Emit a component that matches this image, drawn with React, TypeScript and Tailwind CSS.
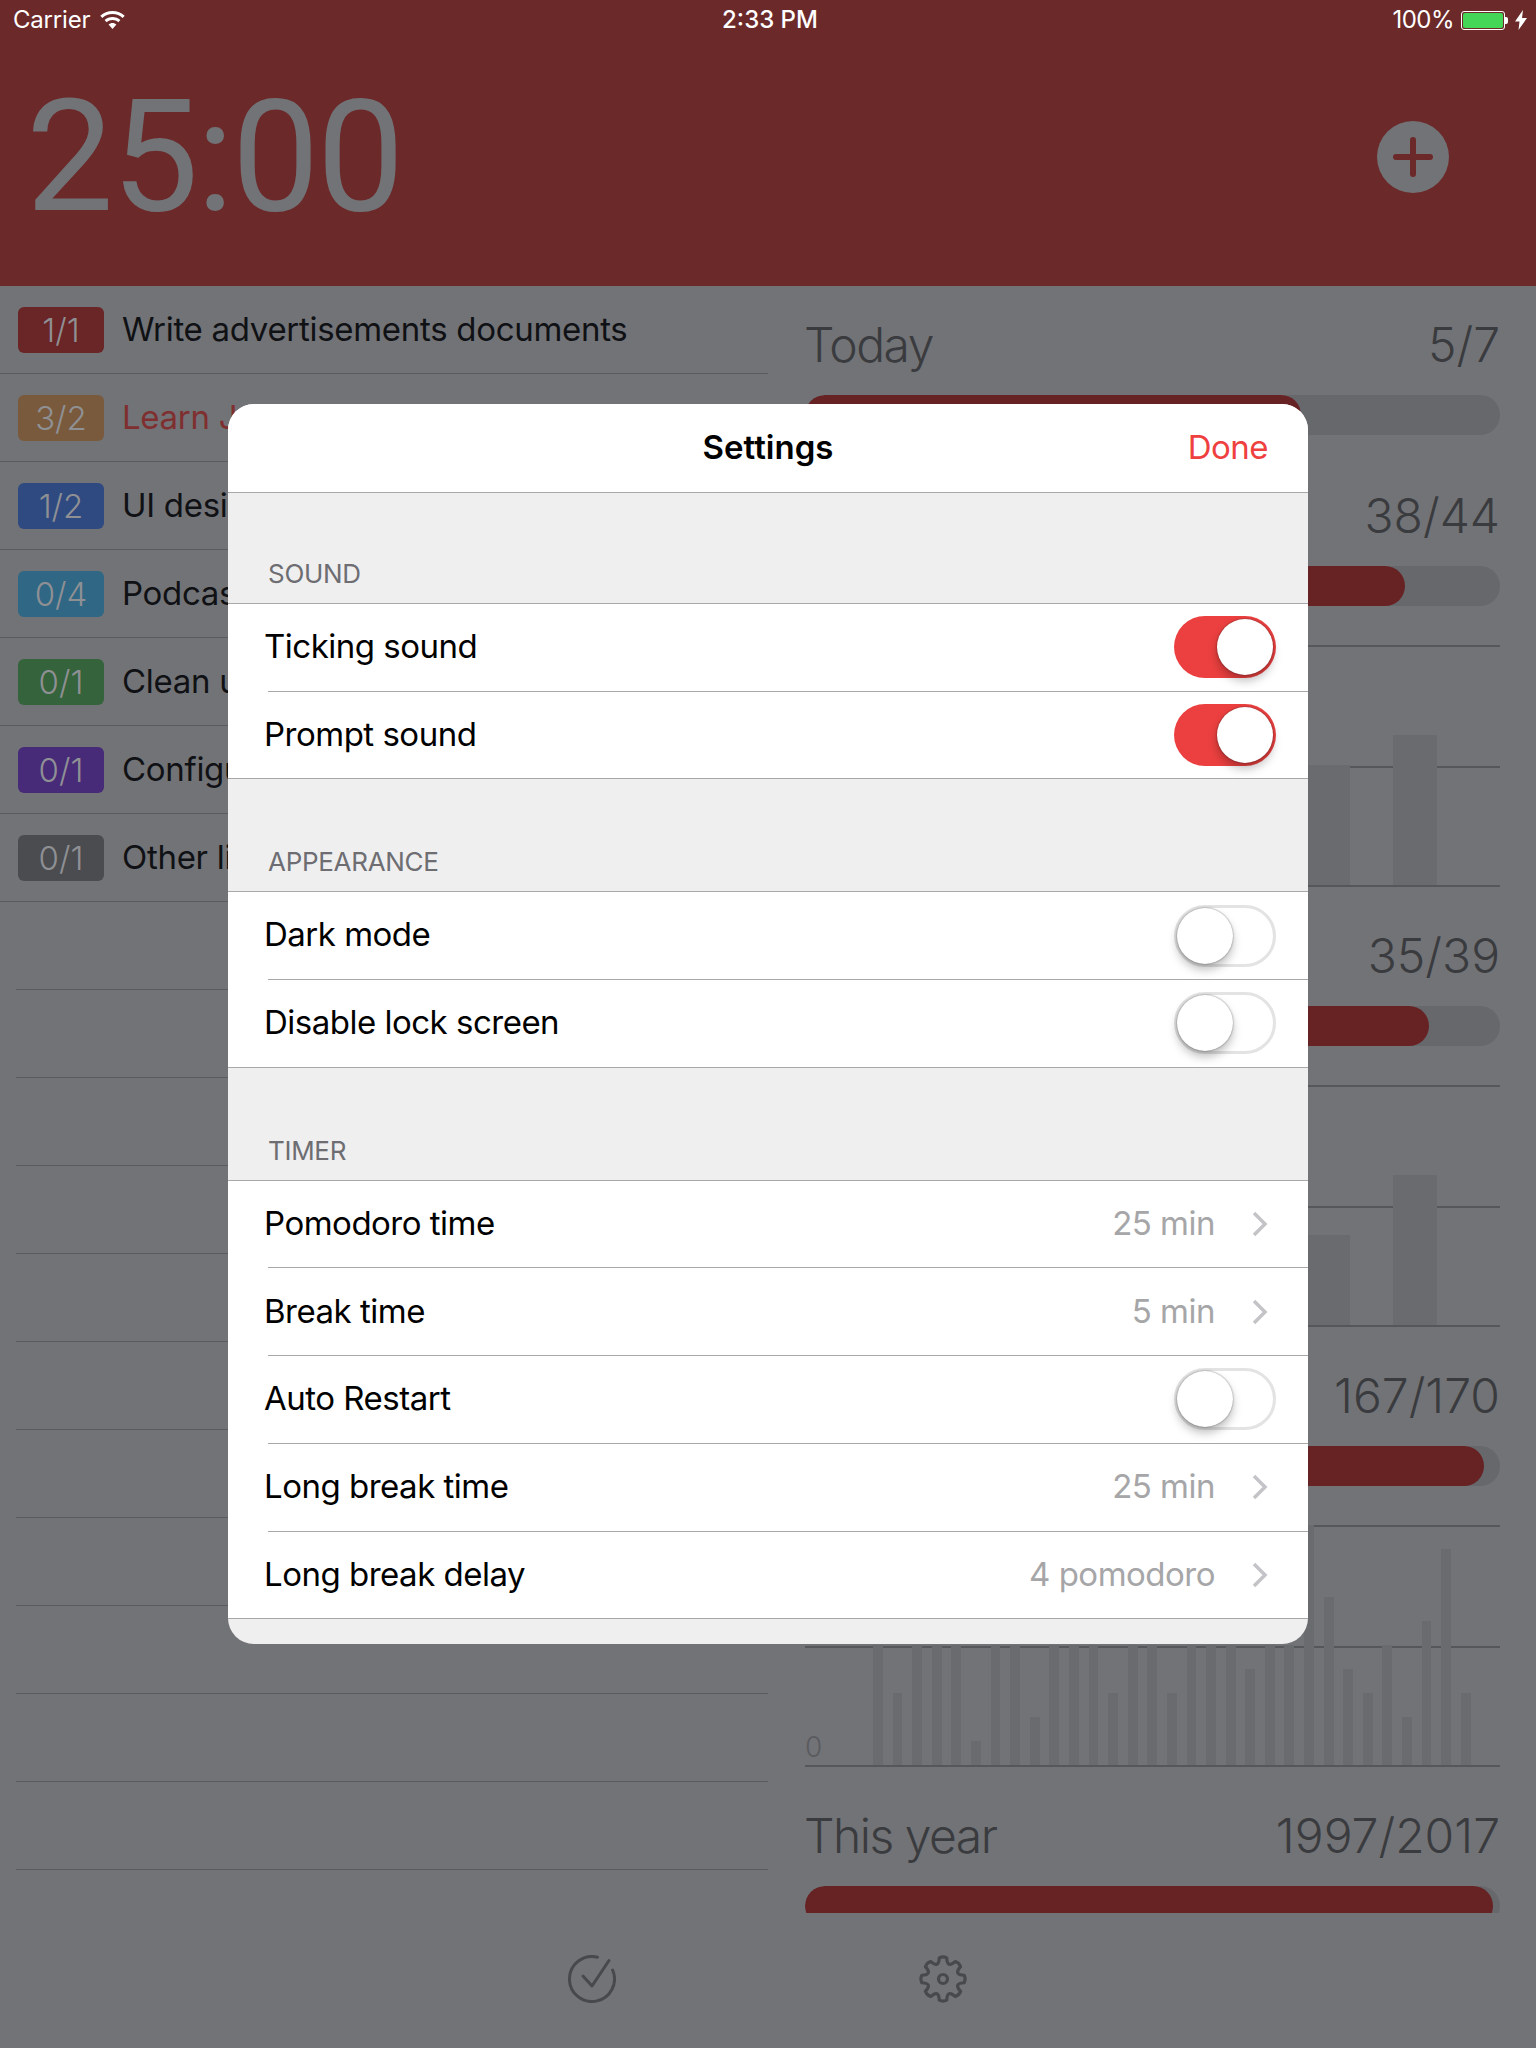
import React from "react";

const tasks = [
  { count: "1/1", color: "bg-[#6a2527]", name: "Write advertisements documents" },
  { count: "3/2", color: "bg-[#7a5a3c]", name: "Learn JavaScript", late: true },
  { count: "1/2", color: "bg-[#2e4a80]", name: "UI design" },
  { count: "0/4", color: "bg-[#2f6785]", name: "Podcast" },
  { count: "0/1", color: "bg-[#35633b]", name: "Clean up" },
  { count: "0/1", color: "bg-[#472a78]", name: "Configure" },
  { count: "0/1", color: "bg-[#4b4c50]", name: "Other links" },
];

const monthValues = [5, 3, 5, 5, 5, 1, 5, 5, 2, 5, 5, 5, 3, 5, 5, 3, 5, 5, 5, 4, 5, 5, 10, 7, 4, 3, 5, 2, 6, 9, 3];

// 8 rounded teeth around the centre of a 48 box
function gearPath() {
  const pt = (deg: number, r: number) => {
    const a = (deg * Math.PI) / 180;
    return `${(24 + r * Math.cos(a)).toFixed(2)} ${(24 + r * Math.sin(a)).toFixed(2)}`;
  };
  let d = "";
  for (let i = 0; i < 8; i++) {
    const a = i * 45 - 90;
    d += `${i === 0 ? "M" : "L"}${pt(a - 10, 21.5)} Q${pt(a, 23)} ${pt(a + 10, 21.5)} Q${pt(a + 22.5, 11)} ${pt(a + 35, 21.5)} `;
  }
  return d + "Z";
}

function StatusBar() {
  return (
    <div className="flex h-10 items-center justify-between pl-[13px] pr-[9px] text-[24px] text-white">
      <div className="flex w-[300px] items-center gap-[10px] tracking-[-0.2px]">
        <span>Carrier</span>
        <svg width="25" height="18" viewBox="0 0 25 18" fill="white">
          <path d="M12.5 0C7.8 0 3.5 1.8 0.3 4.8l2 2.2C5 4.5 8.6 3 12.5 3s7.5 1.5 10.2 4l2-2.2C21.500 1.800 17.200 0 12.500 0z" />
          <path d="M12.500 6c-3 0-5.800 1.200-7.900 3.100l2.100 2.200c1.500-1.400 3.600-2.300 5.800-2.300s4.300 0.900 5.800 2.300l2.100-2.200C18.300 7.200 15.500 6 12.500 6z" />
          <path d="M12.500 12c-1.500 0-2.900 0.600-3.900 1.500l3.900 4.500 3.900-4.500c-1-0.900-2.400-1.500-3.900-1.500z" />
        </svg>
      </div>
      <span className="font-medium">2:33 PM</span>
      <div className="flex w-[300px] items-center justify-end">
        <span className="tracking-[-0.5px]">100%</span>
        <div className="ml-[7px] h-[19px] w-[44px] rounded-[3px] border border-white p-[1px]">
          <div className="h-full w-full rounded-[2px] bg-[#44d656]" />
        </div>
        <div className="h-[7px] w-[3px] rounded-r-[2px] bg-white" />
        <svg className="ml-[7px]" width="12" height="20" viewBox="0 0 12 20" fill="white">
          <path d="M8 0 0 11.500h4.500L3.500 20 12 8H7z" />
        </svg>
      </div>
    </div>
  );
}

function Header() {
  return (
    <header className="h-[286px] bg-[#6b2929]">
      <StatusBar />
      <div className="flex h-[234px] items-center justify-between pl-[26px] pr-[87px]">
        <span className="font-['Roboto',sans-serif] text-[156px] leading-none tracking-[-2.500px] text-[#727377]">25:00</span>
        <div className="flex h-[72px] w-[72px] items-center justify-center rounded-full bg-[#727377]">
          <svg width="40" height="40" viewBox="0 0 40 40" stroke="#6b2929" strokeWidth="6" strokeLinecap="round">
            <path d="M20 3v34M3 20h34" />
          </svg>
        </div>
      </div>
    </header>
  );
}

function TaskRow({ count, color, name, late }: { count: string; color: string; name: string; late?: boolean }) {
  return (
    <div className="flex h-[88px] items-center gap-[18px] border-b border-[#5b5c60] pl-[18px]">
      <div className={`flex h-[46px] w-[86px] items-center justify-center rounded-[6px] pt-[2px] text-[33px] font-light text-[#8f9094] ${color}`}>
        {count}
      </div>
      <span className={`pt-[1px] text-[33px] tracking-[-0.3px] ${late ? "text-[#7f2f30]" : "text-[#101114]"}`}>{name}</span>
    </div>
  );
}

function TaskList() {
  return (
    <div className="w-[768px] overflow-hidden">
      {tasks.map((t, i) => (
        <TaskRow key={i} {...t} />
      ))}
      {Array.from({ length: 11 }).map((_, i) => (
        <div key={i} className="ml-4 h-[88px] border-b border-[#5b5c60]" />
      ))}
    </div>
  );
}

function StatHead({ title, value, pct, className }: { title: string; value: string; pct: number; className: string }) {
  return (
    <div className={className}>
      <div className="mb-5 flex h-[60px] items-center justify-between text-[48px] font-light text-[#3a3b3e]">
        <span className="-ml-[1px] tracking-[-1.5px]">{title}</span>
        <span>{value}</span>
      </div>
      <div className="h-10 overflow-hidden rounded-[20px] bg-[#67686c]">
        <div className="h-full rounded-[20px] bg-[#672223]" style={{ width: `${pct}%` }} />
      </div>
    </div>
  );
}

function Chart({ bars, wide, className }: { bars: number[]; wide?: boolean; className: string }) {
  return (
    <div className={`relative h-[242px] border-y-2 border-[#56575b] ${className}`}>
      <div className="absolute inset-x-0 top-[119px] h-0.5 bg-[#56575b]" />
      <span className="absolute bottom-[2px] left-0 text-[28px] font-light leading-8 text-[#5a5b5f]">0</span>
      <div className={`absolute bottom-0 flex items-end ${wide ? "left-[66px] gap-[43px]" : "left-[68px] gap-[9.75px]"}`}>
        {bars.map((v, i) => (
          <div
            key={i}
            className={`bg-[#6a6b6f] ${wide ? "w-[44px]" : "w-[9.85px]"}`}
            style={{ height: v * (wide ? 30 : 24) }}
          />
        ))}
      </div>
    </div>
  );
}

function Stats() {
  return (
    <div className="w-[696px] overflow-hidden pl-[1px]">
      <StatHead className="mt-[29px]" title="Today" value="5/7" pct={71.4} />
      <StatHead className="mt-[51px]" title="This week" value="38/44" pct={86.4} />
      <Chart className="mt-[39px]" bars={[2, 3, 4, 3, 4, 4, 5]} wide />
      <StatHead className="mt-[39px]" title="Last week" value="35/39" pct={89.8} />
      <Chart className="mt-[39px]" bars={[3, 4, 4, 2, 3, 3, 5]} wide />
      <StatHead className="mt-[39px]" title="This month" value="167/170" pct={97.7} />
      <Chart className="mt-[39px]" bars={monthValues} />
      <StatHead className="mt-[39px]" title="This year" value="1997/2017" pct={99} />
    </div>
  );
}

function TabBar() {
  return (
    <div className="flex flex-1 items-center pb-[3px] pl-[568px]">
      <svg width="48" height="48" viewBox="0 0 48 48" fill="none" stroke="#48494c" strokeWidth="3" strokeLinecap="round" strokeLinejoin="round">
        <path d="M44.600 15A22.500 22.500 0 1 1 29.500 2.200" />
        <path d="M15 21l9 10L41 5.500" />
      </svg>
      <svg className="ml-[303px]" width="48" height="48" viewBox="0 0 48 48" fill="none" stroke="#48494c" strokeWidth="3.2" strokeLinejoin="round">
        <path d={gearPath()} />
        <circle cx="24" cy="24" r="4.500" />
      </svg>
    </div>
  );
}

function Toggle({ on }: { on?: boolean }) {
  return (
    <div
      className={`flex h-[62px] w-[102px] items-center rounded-full ${
        on ? "justify-end bg-[#ec4040] px-[3px]" : "justify-start border-[3px] border-[#e3e3e3]"
      }`}
    >
      <div className="h-[56px] w-[56px] rounded-full bg-white shadow-[0_6px_10px_rgba(0,0,0,0.25),0_0_2px_rgba(0,0,0,0.5)]" />
    </div>
  );
}

function Chevron() {
  return (
    <svg width="16" height="26" viewBox="0 0 16 26" fill="none" stroke="#c4c4c8" strokeWidth="3.500">
      <path d="M2 2l11 11L2 24" />
    </svg>
  );
}

function SectionLabel({ text, className }: { text: string; className: string }) {
  return (
    <div className={`flex items-end border-b border-[#a8a8a8] pb-[13px] pl-10 text-[26px] leading-8 tracking-[-0.3px] text-[#6d6d72] ${className}`}>
      {text}
    </div>
  );
}

function Row({ label, value, toggle, last }: { label: string; value?: string; toggle?: "on" | "off"; last?: boolean }) {
  return (
    <div className={`flex h-[87.7px] items-center bg-white pl-10 ${last ? "border-b border-[#a8a8a8]" : ""}`}>
      <div className={`flex h-full flex-1 items-center pr-[32px] ${last ? "" : "border-b border-[#a8a8a8]"}`}>
        <span className="-ml-[4px] flex-1 pb-[1px] text-[33px] tracking-[-0.5px] text-black">{label}</span>
        {value && <span className="mr-[37px] pb-[1px] text-[33px] tracking-[-0.5px] text-[#a6a6a8]">{value}</span>}
        {value && <span className="mr-[8px]"><Chevron /></span>}
        {toggle && <Toggle on={toggle === "on"} />}
      </div>
    </div>
  );
}

function SettingsModal() {
  return (
    <div className="absolute left-[228px] top-[404px] h-[1240px] w-[1080px] overflow-hidden rounded-[26px] bg-[#efeff0]">
      <div className="relative flex h-[89px] items-center justify-center border-b border-[#a8a8a8] bg-white">
        <span className="text-[33px] font-semibold text-black">Settings</span>
        <span className="absolute right-[40px] text-[33px] tracking-[-0.5px] text-[#ef4040]">Done</span>
      </div>
      <SectionLabel className="h-[111px]" text="SOUND" />
      <Row label="Ticking sound" toggle="on" />
      <Row label="Prompt sound" toggle="on" last />
      <SectionLabel className="h-[113px]" text="APPEARANCE" />
      <Row label="Dark mode" toggle="off" />
      <Row label="Disable lock screen" toggle="off" last />
      <SectionLabel className="h-[113px]" text="TIMER" />
      <Row label="Pomodoro time" value="25 min" />
      <Row label="Break time" value="5 min" />
      <Row label="Auto Restart" toggle="off" />
      <Row label="Long break time" value="25 min" />
      <Row label="Long break delay" value="4 pomodoro" last />
    </div>
  );
}

export default function App() {
  return (
    <div className="relative flex h-[2048px] w-[1536px] flex-col overflow-hidden bg-[#727377] font-['Inter',sans-serif]">
      <Header />
      <main className="flex h-[1627px] gap-[36px] overflow-hidden">
        <TaskList />
        <Stats />
      </main>
      <TabBar />
      <SettingsModal />
    </div>
  );
}
